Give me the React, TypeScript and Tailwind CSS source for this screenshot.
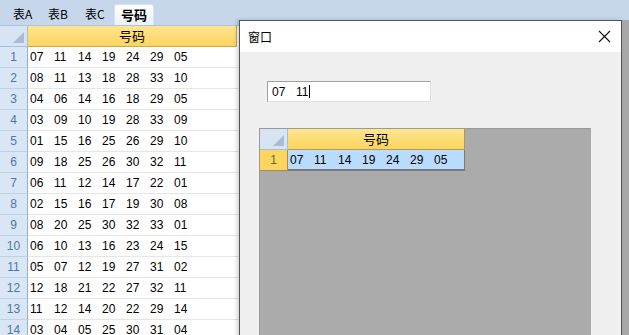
import React from "react";

const rows: string[][] = [
  ["07", "11", "14", "19", "24", "29", "05"],
  ["08", "11", "13", "18", "28", "33", "10"],
  ["04", "06", "14", "16", "18", "29", "05"],
  ["03", "09", "10", "19", "28", "33", "09"],
  ["01", "15", "16", "25", "26", "29", "10"],
  ["09", "18", "25", "26", "30", "32", "11"],
  ["06", "11", "12", "14", "17", "22", "01"],
  ["02", "15", "16", "17", "19", "30", "08"],
  ["08", "20", "25", "30", "32", "33", "01"],
  ["06", "10", "13", "16", "23", "24", "15"],
  ["05", "07", "12", "19", "27", "31", "02"],
  ["12", "18", "21", "22", "27", "32", "11"],
  ["11", "12", "14", "20", "22", "29", "14"],
  ["03", "04", "05", "25", "30", "31", "04"],
];

const cjk = { fontFamily: '"Noto Sans CJK SC", "Noto Sans", sans-serif' };
const num = { fontFamily: '"Liberation Sans", Arial, sans-serif' };

function Nums({ values }: { values: string[] }) {
  return (
    <div className="flex items-center text-[12px] text-black" style={num}>
      {values.map((v, i) => (
        <span key={i} className="w-[24px] shrink-0">
          {v}
        </span>
      ))}
    </div>
  );
}

function Corner({ w }: { w: string }) {
  return (
    <div className={`${w} h-full shrink-0 bg-[#d7e4f3] border-r border-b border-[#a9bfd8] relative`}>
      <div className="absolute right-[3px] bottom-[3px] w-0 h-0 border-l-[11px] border-l-transparent border-b-[11px] border-b-[#aabcd3]" />
    </div>
  );
}

export default function App() {
  return (
    <div className="w-[629px] h-[335px] relative overflow-hidden bg-white" style={cjk}>
      {/* Tab bar */}
      <div className="h-[26px] bg-[#c6d7ec] border-b border-[#aec3dd] flex items-end text-[12px] text-black">
        <div className="h-[22px] flex items-center pl-[13px] w-[48px]">表A</div>
        <div className="h-[22px] flex items-center w-[37px]">表B</div>
        <div className="h-[22px] flex items-center w-[29px]">表C</div>
        <div className="h-[21px] w-[40px] bg-gradient-to-b from-[#ffffff] to-[#eaf2fc] rounded-t-[3px] border border-b-0 border-[#d7e3f2] flex items-center justify-center font-bold text-[13px]">
          号码
        </div>
      </div>

      {/* Main grid */}
      <div className="flex flex-col">
        <div className="flex h-[21px]">
          <Corner w="w-[28px]" />
          <div className="w-[209px] h-full bg-gradient-to-b from-[#fee590] to-[#fcd55c] border-b border-r border-[#c9a850] flex items-center justify-center text-[13px] text-black">
            号码
          </div>
          <div className="flex-1" />
        </div>
        {rows.map((r, i) => (
          <div key={i} className="flex h-[21px] shrink-0">
            <div
              className="w-[28px] h-full shrink-0 bg-[#d9e6f5] border-r border-b border-r-[#94afcc] border-b-[#bdd0e6] flex items-center justify-center text-[12px] text-[#4f77a6]"
              style={num}
            >
              {i + 1}
            </div>
            <div className="w-[209px] h-full border-b border-[#e6e6e6] flex items-center pl-[2px]">
              <Nums values={r} />
            </div>
            <div className="flex-1 h-full border-b border-[#e6e6e6]" />
          </div>
        ))}
      </div>

      {/* Gray strip at right */}
      <div className="absolute right-0 top-[20px] w-[8px] h-[315px] bg-[#a8a8a8]" />

      {/* Dialog window */}
      <div className="absolute left-[239px] top-[20px] w-[383px] h-[320px] border border-[#555555] bg-[#f0f0f0] flex flex-col shadow-[-2px_0_4px_rgba(0,0,0,0.18)]">
        <div className="h-[31px] bg-white flex items-center justify-between pl-[8px] pr-[10px] shrink-0">
          <span className="text-[12px] text-black">窗口</span>
          <svg width="13" height="13" viewBox="0 0 13 13" className="block">
            <path d="M1 1 L12 12 M12 1 L1 12" stroke="#111" strokeWidth="1.1" fill="none" />
          </svg>
        </div>
        <div className="flex flex-col pl-[19px] pt-[29px]">
          <div className="ml-[8px] w-[164px] h-[21px] bg-white border border-[#a0a0a0] border-b-[#e0e0e0] border-r-[#e0e0e0] flex items-center pl-[4px] text-[12px] text-black" style={num}>
            <span className="w-[24px]">07</span>
            <span>11</span>
            <span className="w-[1px] h-[13px] bg-black ml-[1px]" />
          </div>
          <div className="mt-[26px] w-[332px] h-[230px] bg-[#ababab] border-t border-l border-[#9a9a9a] flex flex-col">
            <div className="flex h-[21px] shrink-0">
              <Corner w="w-[28px]" />
              <div className="w-[177px] h-full bg-gradient-to-b from-[#fee590] to-[#fcd55c] border-b border-r border-[#b59a55] flex items-center justify-center text-[13px] text-black">
                号码
              </div>
            </div>
            <div className="flex h-[21px] shrink-0">
              <div
                className="w-[28px] h-full bg-[#fcd65f] border-r border-b border-[#a88d4f] flex items-center justify-center text-[12px] text-[#66663a]"
                style={num}
              >
                1
              </div>
              <div className="w-[177px] h-full bg-[#b9dcff] border-b-2 border-r border-b-[#7a7a7a] border-r-[#7a7a7a] flex items-center pl-[2px]">
                <Nums values={rows[0]} />
              </div>
            </div>
          </div>
        </div>
      </div>
    </div>
  );
}
